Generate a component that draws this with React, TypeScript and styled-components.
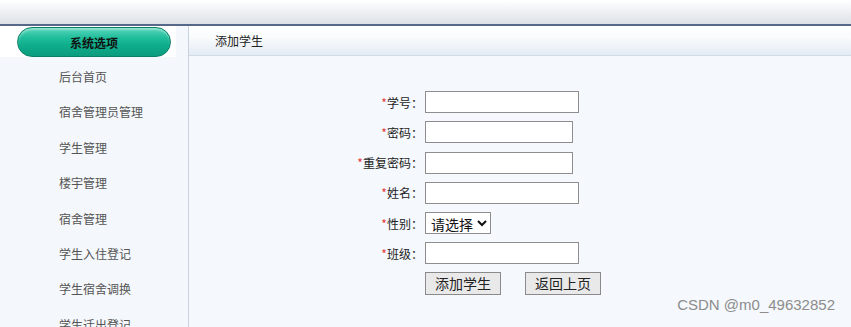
import styled, { createGlobalStyle } from "styled-components";

const GlobalStyle = createGlobalStyle`
  html, body {
    margin: 0;
    padding: 0;
    background: #f5f8fc;
    font-family: "Noto Sans CJK SC", "Noto Sans", sans-serif;
    overflow: hidden;
  }
`;

const menuItems = [
  "后台首页",
  "宿舍管理员管理",
  "学生管理",
  "楼宇管理",
  "宿舍管理",
  "学生入住登记",
  "学生宿舍调换",
  "学生迁出登记",
];

const formRows = [
  { label: "学号", width: 154 },
  { label: "密码", width: 148 },
  { label: "重复密码", width: 148 },
  { label: "姓名", width: 154 },
  { label: "性别", width: 0 },
  { label: "班级", width: 154 },
];

function App() {
  return (
    <>
      <GlobalStyle />
      <Page>
        <TopBar />
        <Body>
          <Sidebar>
            <PillWrap>
              <Pill>系统选项</Pill>
            </PillWrap>
            <Menu>
              {menuItems.map((item) => (
                <MenuItem key={item}>{item}</MenuItem>
              ))}
            </Menu>
          </Sidebar>
          <Main>
            <MainHeader>添加学生</MainHeader>
            <Form>
              {formRows.map((row) => (
                <Row key={row.label}>
                  <Label>
                    <Star>*</Star>
                    {row.label}：
                  </Label>
                  {row.width ? (
                    <Input $width={row.width} />
                  ) : (
                    <Select defaultValue="">
                      <option value="">请选择</option>
                      <option value="m">男</option>
                      <option value="f">女</option>
                    </Select>
                  )}
                </Row>
              ))}
              <Row>
                <Label />
                <Buttons>
                  <Button>添加学生</Button>
                  <Button>返回上页</Button>
                </Buttons>
              </Row>
            </Form>
            <Watermark>CSDN @m0_49632852</Watermark>
          </Main>
        </Body>
      </Page>
    </>
  );
}

export default App;

const Page = styled.div`
  width: 851px;
  height: 327px;
  display: flex;
  flex-direction: column;
  overflow: hidden;
`;

const TopBar = styled.div`
  height: 24px;
  flex-shrink: 0;
  background: linear-gradient(#ffffff 0%, #eef0f3 50%, #dde2e7 100%);
  border-bottom: 2px solid #56698a;
`;

const Body = styled.div`
  flex: 1;
  display: flex;
  min-height: 0;
`;

const Sidebar = styled.div`
  width: 188px;
  flex-shrink: 0;
  background: #f4f7fb;
  border-right: 1px solid #c9d1dc;
  display: flex;
  flex-direction: column;
`;

const PillWrap = styled.div`
  padding: 1px 0 0 17px;
  background: #ffffff;
  height: 32px;
  box-sizing: border-box;
  width: 176px;
`;

const Pill = styled.div`
  width: 154px;
  height: 30px;
  box-sizing: border-box;
  border-radius: 15px;
  border: 1px solid #0b7f68;
  background: linear-gradient(#5ad6bb 0%, #1fbd9b 35%, #0fae8c 60%, #0b9c7e 100%);
  box-shadow: inset 0 2px 2px rgba(255, 255, 255, 0.35);
  display: flex;
  align-items: center;
  justify-content: center;
  font-size: 12px;
  font-weight: 700;
  color: #111;
`;

const Menu = styled.div`
  display: flex;
  flex-direction: column;
  padding-top: 2px;
`;

const MenuItem = styled.div`
  height: 35.4px;
  line-height: 35.4px;
  padding-left: 59px;
  font-size: 12px;
  color: #555;
`;

const Main = styled.div`
  flex: 1;
  position: relative;
  background: #f5f8fc;
`;

const MainHeader = styled.div`
  height: 29px;
  border-bottom: 1px solid #d2dbe5;
  background: linear-gradient(#ffffff 0%, #f9fbfc 40%, #e3ebf4 100%);
  padding-left: 26px;
  line-height: 29px;
  font-size: 12px;
  color: #222;
`;

const Form = styled.div`
  display: flex;
  flex-direction: column;
  gap: 8.3px;
  padding: 35px 0 0 164px;
`;

const Row = styled.div`
  display: flex;
  align-items: center;
  height: 22px;
`;

const Label = styled.div`
  width: 70px;
  text-align: right;
  padding-right: 2px;
  font-size: 12px;
  color: #222;
  white-space: nowrap;
`;

const Star = styled.span`
  color: #e23a3a;
  font-size: 12px;
`;

const Input = styled.input<{ $width: number }>`
  width: ${(p) => p.$width}px;
  height: 22px;
  box-sizing: border-box;
  border: 1px solid #8e8e8e;
  background: #fff;
  margin: 0;
  padding: 0 3px;
`;

const Select = styled.select`
  height: 22px;
  width: 66px;
  box-sizing: border-box;
  border: 1px solid #8e8e8e;
  background: #fff;
  margin: 0;
  padding: 0 1px;
  font-family: "Noto Sans CJK SC", sans-serif;
  font-size: 14px;
  color: #111;
`;

const Buttons = styled.div`
  display: flex;
  gap: 24px;
`;

const Button = styled.button`
  width: 76px;
  height: 23px;
  box-sizing: border-box;
  border: 1px solid #8a8a8a;
  background: #e9e9e9;
  font-family: "Noto Sans CJK SC", sans-serif;
  font-size: 14px;
  color: #222;
  padding: 0;
  line-height: 21px;
`;

const Watermark = styled.div`
  position: absolute;
  right: 16px;
  bottom: 14px;
  font-family: "Liberation Sans", "Noto Sans CJK SC", sans-serif;
  font-size: 15px;
  color: #8c8c8c;
  white-space: nowrap;
`;
